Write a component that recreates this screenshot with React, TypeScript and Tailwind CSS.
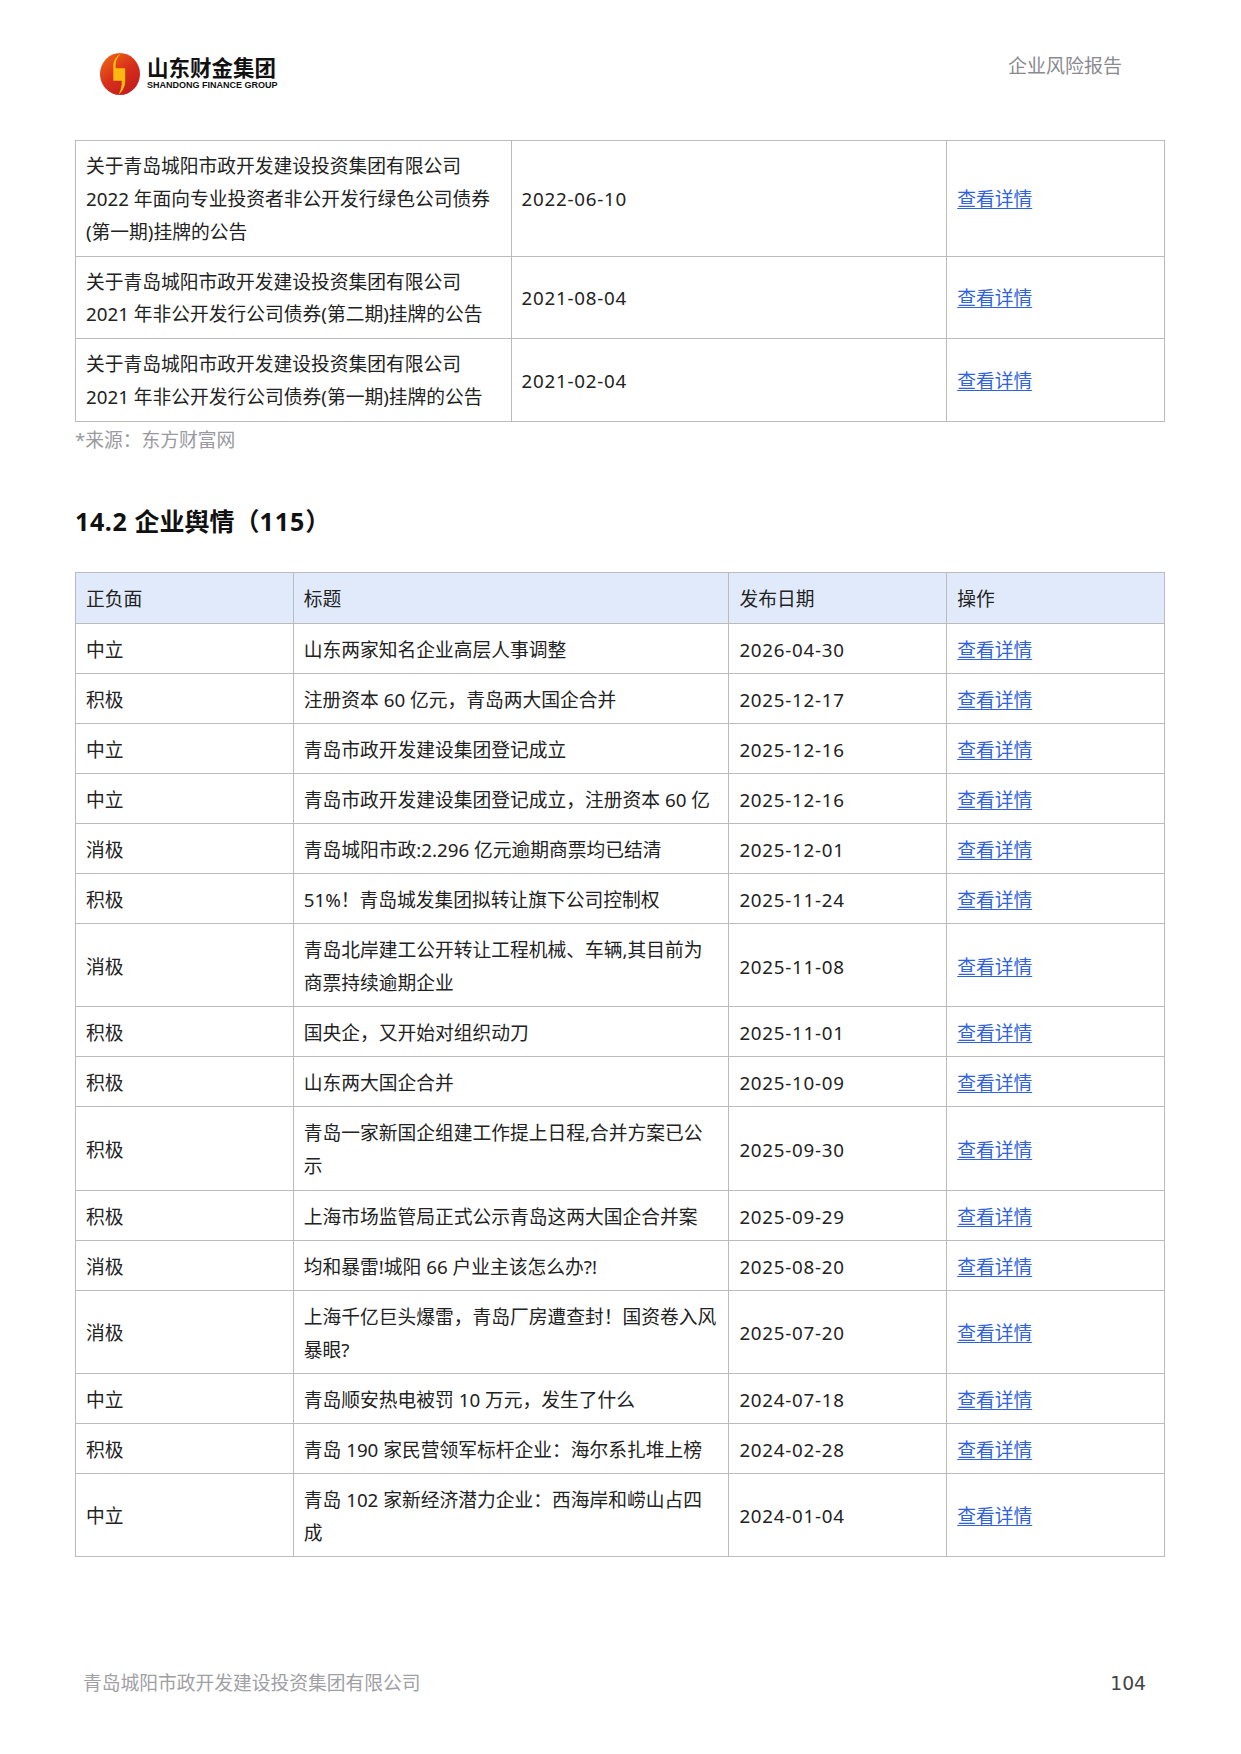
const font = "font-['Noto_Sans','Noto_Sans_CJK_SC',sans-serif]";

const notices = [
  {
    title: "关于青岛城阳市政开发建设投资集团有限公司 2022 年面向专业投资者非公开发行绿色公司债券(第一期)挂牌的公告",
    date: "2022-06-10",
  },
  { title: "关于青岛城阳市政开发建设投资集团有限公司 2021 年非公开发行公司债券(第二期)挂牌的公告", date: "2021-08-04" },
  { title: "关于青岛城阳市政开发建设投资集团有限公司 2021 年非公开发行公司债券(第一期)挂牌的公告", date: "2021-02-04" },
];

const news = [
  ["中立", "山东两家知名企业高层人事调整", "2026-04-30"],
  ["积极", "注册资本 60 亿元，青岛两大国企合并", "2025-12-17"],
  ["中立", "青岛市政开发建设集团登记成立", "2025-12-16"],
  ["中立", "青岛市政开发建设集团登记成立，注册资本 60 亿", "2025-12-16"],
  ["消极", "青岛城阳市政:2.296 亿元逾期商票均已结清", "2025-12-01"],
  ["积极", "51%！青岛城发集团拟转让旗下公司控制权", "2025-11-24"],
  ["消极", "青岛北岸建工公开转让工程机械、车辆,其目前为商票持续逾期企业", "2025-11-08"],
  ["积极", "国央企，又开始对组织动刀", "2025-11-01"],
  ["积极", "山东两大国企合并", "2025-10-09"],
  ["积极", "青岛一家新国企组建工作提上日程,合并方案已公示", "2025-09-30"],
  ["积极", "上海市场监管局正式公示青岛这两大国企合并案", "2025-09-29"],
  ["消极", "均和暴雷!城阳 66 户业主该怎么办?!", "2025-08-20"],
  ["消极", "上海千亿巨头爆雷，青岛厂房遭查封！国资卷入风暴眼?", "2025-07-20"],
  ["中立", "青岛顺安热电被罚 10 万元，发生了什么", "2024-07-18"],
  ["积极", "青岛 190 家民营领军标杆企业：海尔系扎堆上榜", "2024-02-28"],
  ["中立", "青岛 102 家新经济潜力企业：西海岸和崂山占四成", "2024-01-04"],
];

const cell = "border border-[#bbbbbb] px-[10px] pt-[9px] pb-[7px] align-middle font-normal text-left";
const headCell = "border border-[#bbbbbb] px-[10px] pt-[9px] pb-[8px] align-middle font-normal text-left";
const dateCell = `${cell} tracking-[0.75px]`;

function DetailLink() {
  return <a className="text-[#2f62dc] underline underline-offset-2">查看详情</a>;
}

function Logo() {
  return (
    <div className="flex items-center gap-[7px]">
      <svg width="40" height="42" viewBox="0 0 40 42">
        <defs>
          <linearGradient id="sphere" x1="0.1" y1="0" x2="0.8" y2="1">
            <stop offset="0" stopColor="#ee6a12" />
            <stop offset="0.5" stopColor="#d8301c" />
            <stop offset="1" stopColor="#c01a1e" />
          </linearGradient>
        </defs>
        <ellipse cx="20" cy="21" rx="20" ry="21" fill="url(#sphere)" />
        <path d="M21.5 0.3 C15.5 3.5 12.5 9 13.3 15.3 L13.3 27.7 L21.8 27.7 C22 33 20.5 38 18.5 41.8 C23 38 25.4 33 25.2 27.7 L25.2 15.3 L15.8 15.3 C15 9 17 4 21.5 0.3 Z" fill="#fdb90f" />
      </svg>
      <div className="mt-[-3px] flex flex-col font-['Noto_Sans_CJK_SC','Liberation_Sans',sans-serif] text-[#111111]">
        <span className="text-[21.5px] font-bold leading-[25px]">山东财金集团</span>
        <span className="font-['Liberation_Sans',sans-serif] text-[9px] font-bold leading-[12px] whitespace-nowrap">SHANDONG FINANCE GROUP</span>
      </div>
    </div>
  );
}

export default function App() {
  return (
    <div className={`${font} flex h-[1754px] w-[1241px] flex-col bg-white px-[75px] text-[18.75px] leading-[33px] text-[#222222]`}>
      <header className="flex h-[140px] shrink-0 items-start justify-between pl-[25px] pr-[44px] pt-[53px]">
        <Logo />
        <span className="text-[19px] leading-[27px] text-[#8a8a8e]">企业风险报告</span>
      </header>

      <table className="w-[1090px] table-fixed border-collapse leading-[32.85px]">
        <colgroup>
          <col className="w-[40%]" />
          <col className="w-[40%]" />
          <col className="w-[20%]" />
        </colgroup>
        <tbody>
          {notices.map((n) => (
            <tr key={n.date}>
              <td className={cell}>{n.title}</td>
              <td className={dateCell}>{n.date}</td>
              <td className={cell}><DetailLink /></td>
            </tr>
          ))}
        </tbody>
      </table>
      <p className="mt-[1px] text-[#9a9aa0]">*来源：东方财富网</p>

      <h2 className="mt-[48px] text-[25px] font-bold leading-[34px] text-[#111111]">
        <span className="tracking-[0.6px]">14.2 </span>企业舆情（<span className="tracking-[1px]">115</span>）
      </h2>

      <table className="mt-[34px] w-[1090px] table-fixed border-collapse leading-[33.05px]">
        <colgroup>
          <col className="w-[20%]" />
          <col className="w-[40%]" />
          <col className="w-[20%]" />
          <col className="w-[20%]" />
        </colgroup>
        <thead>
          <tr className="bg-[#e0eafb]">
            <th className={headCell}>正负面</th>
            <th className={headCell}>标题</th>
            <th className={headCell}>发布日期</th>
            <th className={headCell}>操作</th>
          </tr>
        </thead>
        <tbody>
          {news.map(([tone, title, date]) => (
            <tr key={title}>
              <td className={cell}>{tone}</td>
              <td className={cell}>{title}</td>
              <td className={dateCell}>{date}</td>
              <td className={cell}><DetailLink /></td>
            </tr>
          ))}
        </tbody>
      </table>

      <footer className="mt-auto mb-[55px] flex items-center justify-between pl-[8px] pr-[20px]">
        <span className="text-[#a0a0a4]">青岛城阳市政开发建设投资集团有限公司</span>
        <span className="translate-y-[1px] font-['DejaVu_Sans',sans-serif] text-[#444444]">104</span>
      </footer>
    </div>
  );
}
